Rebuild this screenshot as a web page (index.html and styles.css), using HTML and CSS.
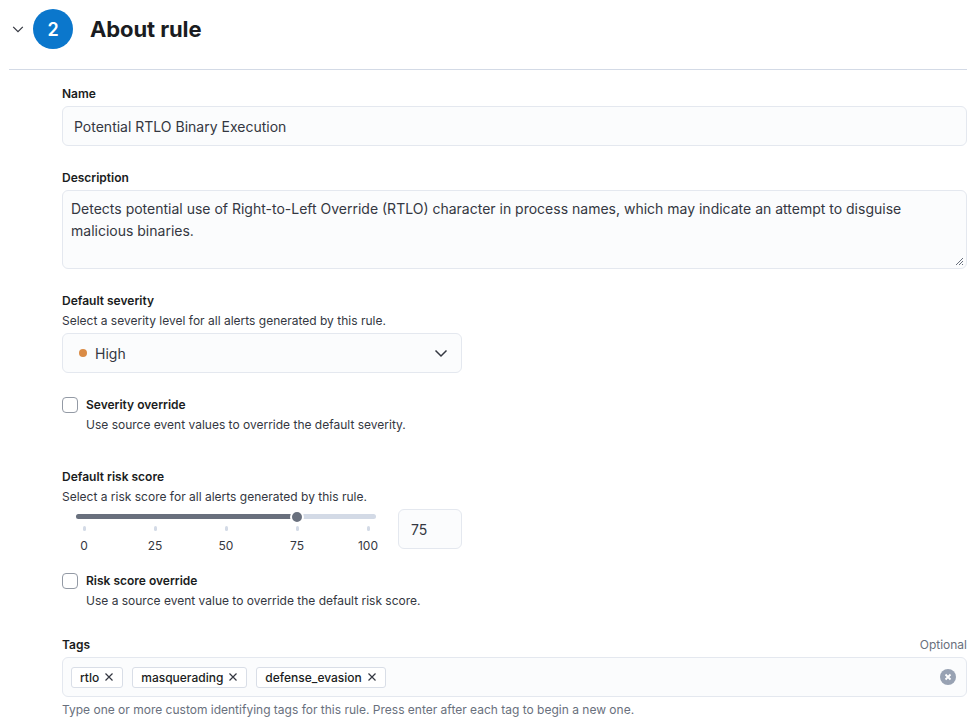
FILE: index.html
```html
<!DOCTYPE html>
<html>
<head>
<meta charset="utf-8">
<link rel="stylesheet" href="styles.css">
</head>
<body>
<div class="page">
  <div class="step-header">
    <svg class="chev" width="14" height="14" viewBox="0 0 16 16"><path d="M2.5 5.5 L8 11 L13.5 5.5" fill="none" stroke="#343741" stroke-width="1.4"/></svg>
    <div class="step-num">2</div>
    <h2 class="step-title">About rule</h2>
  </div>
  <div class="form">
    <div class="row">
      <div class="label">Name</div>
      <div class="input">Potential RTLO Binary Execution</div>
    </div>
    <div class="row">
      <div class="label">Description</div>
      <div class="textarea">Detects potential use of Right-to-Left Override (RTLO) character in process names, which may indicate an attempt to disguise malicious binaries.
        <svg class="grip" width="9" height="9" viewBox="0 0 9 9"><path d="M8 1 L1 8 M8 4 L4 8 M8 7 L7 8" stroke="#69707d" stroke-width="1"/></svg>
      </div>
    </div>
    <div class="row">
      <div class="label">Default severity</div>
      <div class="help top">Select a severity level for all alerts generated by this rule.</div>
      <div class="select">
        <span class="dot"></span><span class="sel-text">High</span>
        <svg class="sel-chev" width="16" height="16" viewBox="0 0 16 16"><path d="M2.5 5.5 L8 11 L13.5 5.5" fill="none" stroke="#343741" stroke-width="1.5"/></svg>
      </div>
    </div>
    <div class="check-row">
      <span class="checkbox"></span>
      <div>
        <div class="check-label">Severity override</div>
        <div class="help">Use source event values to override the default severity.</div>
      </div>
    </div>
    <div class="row risk">
      <div class="label">Default risk score</div>
      <div class="help top">Select a risk score for all alerts generated by this rule.</div>
      <div class="slider-row">
        <div class="slider">
          <div class="track"><div class="fill"></div><span class="thumb"></span></div>
          <div class="ticks">
            <div class="tick"><span class="mark"></span><span>0</span></div>
            <div class="tick"><span class="mark"></span><span>25</span></div>
            <div class="tick"><span class="mark"></span><span>50</span></div>
            <div class="tick"><span class="mark"></span><span>75</span></div>
            <div class="tick"><span class="mark"></span><span>100</span></div>
          </div>
        </div>
        <div class="num">75</div>
      </div>
    </div>
    <div class="check-row last">
      <span class="checkbox"></span>
      <div>
        <div class="check-label">Risk score override</div>
        <div class="help">Use a source event value to override the default risk score.</div>
      </div>
    </div>
    <div class="row tags-row">
      <div class="label-line"><span class="label">Tags</span><span class="optional">Optional</span></div>
      <div class="combo">
        <span class="tag">rtlo<svg width="10" height="10" viewBox="0 0 10 10"><path d="M1.5 1.5 L8.5 8.5 M8.5 1.5 L1.5 8.5" stroke="#343741" stroke-width="1.2"/></svg></span>
        <span class="tag">masquerading<svg width="10" height="10" viewBox="0 0 10 10"><path d="M1.5 1.5 L8.5 8.5 M8.5 1.5 L1.5 8.5" stroke="#343741" stroke-width="1.2"/></svg></span>
        <span class="tag">defense_evasion<svg width="10" height="10" viewBox="0 0 10 10"><path d="M1.5 1.5 L8.5 8.5 M8.5 1.5 L1.5 8.5" stroke="#343741" stroke-width="1.2"/></svg></span>
        <svg class="clear" width="16" height="16" viewBox="0 0 16 16"><circle cx="8" cy="8" r="8" fill="#98a2b3"/><path d="M5.5 5.5 L10.5 10.5 M10.5 5.5 L5.5 10.5" stroke="#fff" stroke-width="1.8"/></svg>
      </div>
      <div class="help after">Type one or more custom identifying tags for this rule. Press enter after each tag to begin a new one.</div>
    </div>
  </div>
</div>
</body>
</html>
```

FILE: styles.css
```css
* { box-sizing: border-box; }
body {
  margin: 0;
  background: #fff;
  font-family: Inter, "Noto Sans", sans-serif;
  color: #343741;
}
.page {
  padding: 9px 10px 0 9px;
}
.step-header {
  display: flex;
  align-items: center;
  height: 40px;
}
.chev { margin-left: 2px; margin-right: 8px; }
.step-num {
  width: 40px;
  height: 40px;
  border-radius: 50%;
  background: #0b77cc;
  color: #fff;
  font-size: 18px;
  font-weight: 600;
  display: flex;
  align-items: center;
  justify-content: center;
}
.step-title {
  margin: 0 0 0 17px;
  font-size: 22px;
  font-weight: 700;
  color: #1a1c21;
  letter-spacing: -0.1px;
}
.form {
  margin-top: 20px;
  border-top: 1px solid #d3dae6;
  padding: 15px 0 0 53px;
}
.row { margin-bottom: 23px; }
.label {
  display: block;
  font-size: 12px;
  font-weight: 600;
  line-height: 18px;
  color: #1a1c21;
  margin-bottom: 3px;
}
.help {
  font-size: 12px;
  line-height: 18px;
  color: #343741;
}
.help.top { margin-top: -1px; margin-bottom: 3px; }
.input, .textarea, .select, .num, .combo {
  background: #fbfcfd;
  border: 1px solid #e4e8ef;
  border-radius: 6px;
  font-size: 14px;
  color: #343741;
}
.input {
  height: 40px;
  padding: 0 11px;
  display: flex;
  align-items: center;
}
.textarea {
  position: relative;
  height: 79px;
  padding: 7px 30px 8px 8px;
  line-height: 22px;
}
.grip { position: absolute; right: 2px; bottom: 2px; }
.select {
  width: 400px;
  height: 40px;
  display: flex;
  align-items: center;
  padding: 0 12px 0 16px;
}
.dot {
  width: 8px; height: 8px; border-radius: 50%;
  background: #da8b45;
  margin-right: 8px;
}
.sel-text { flex: 1; }
.check-row {
  display: flex;
  align-items: flex-start;
  gap: 8px;
  margin-top: 1px;
  margin-bottom: 34px;
}
.check-row.last { margin-bottom: 26px; }
.checkbox {
  width: 16px; height: 16px;
  border: 1px solid #939aa5;
  border-radius: 4px;
  background: #fff;
  margin-top: 1px;
  flex: none;
}
.check-label {
  font-size: 12px;
  font-weight: 600;
  line-height: 18px;
  color: #1a1c21;
  margin-bottom: 2px;
}
.row.risk { margin-bottom: 17px; }
.slider-row { display: flex; gap: 8px; align-items: flex-start; }
.slider { width: 328px; padding-top: 5px; }
.track {
  position: relative;
  margin: 0 0 0 14px;
  width: 300px;
  height: 5px;
  border-radius: 3px;
  background: #d3dae6;
}
.fill {
  width: 221px; height: 5px; border-radius: 3px;
  background: #69707d;
}
.thumb {
  position: absolute;
  left: 214px; top: -4px;
  width: 14px; height: 14px;
  border-radius: 50%;
  background: #69707d;
  border: 2px solid #fff;
}
.ticks {
  display: flex;
  justify-content: space-between;
  width: 314px;
  margin-left: 7px;
  margin-top: 7px;
}
.tick {
  width: 30px;
  display: flex;
  flex-direction: column;
  align-items: center;
  font-size: 12px;
  color: #343741;
}
.mark {
  width: 3px; height: 5px;
  border-radius: 2px;
  background: #d3dae6;
  margin-bottom: 6px;
}
.tick span:last-child { line-height: 18px; }
.num {
  width: 64px; height: 40px;
  display: flex; align-items: center;
  padding: 0 12px;
}
.label-line {
  display: flex;
  justify-content: space-between;
  align-items: baseline;
}
.optional { font-size: 12px; color: #69707d; line-height: 18px; }
.combo {
  height: 40px;
  display: flex;
  align-items: center;
  gap: 9px;
  padding: 0 10px 0 8px;
}
.tag {
  display: inline-flex;
  align-items: center;
  gap: 5px;
  height: 21px;
  padding: 0 8px;
  background: #fff;
  border: 1px solid #d9dee7;
  border-radius: 3px;
  font-size: 12px;
  font-weight: 500;
  color: #1a1c21;
}
.clear { margin-left: auto; }
.help.after { margin-top: 4px; color: #69707d; }
```
